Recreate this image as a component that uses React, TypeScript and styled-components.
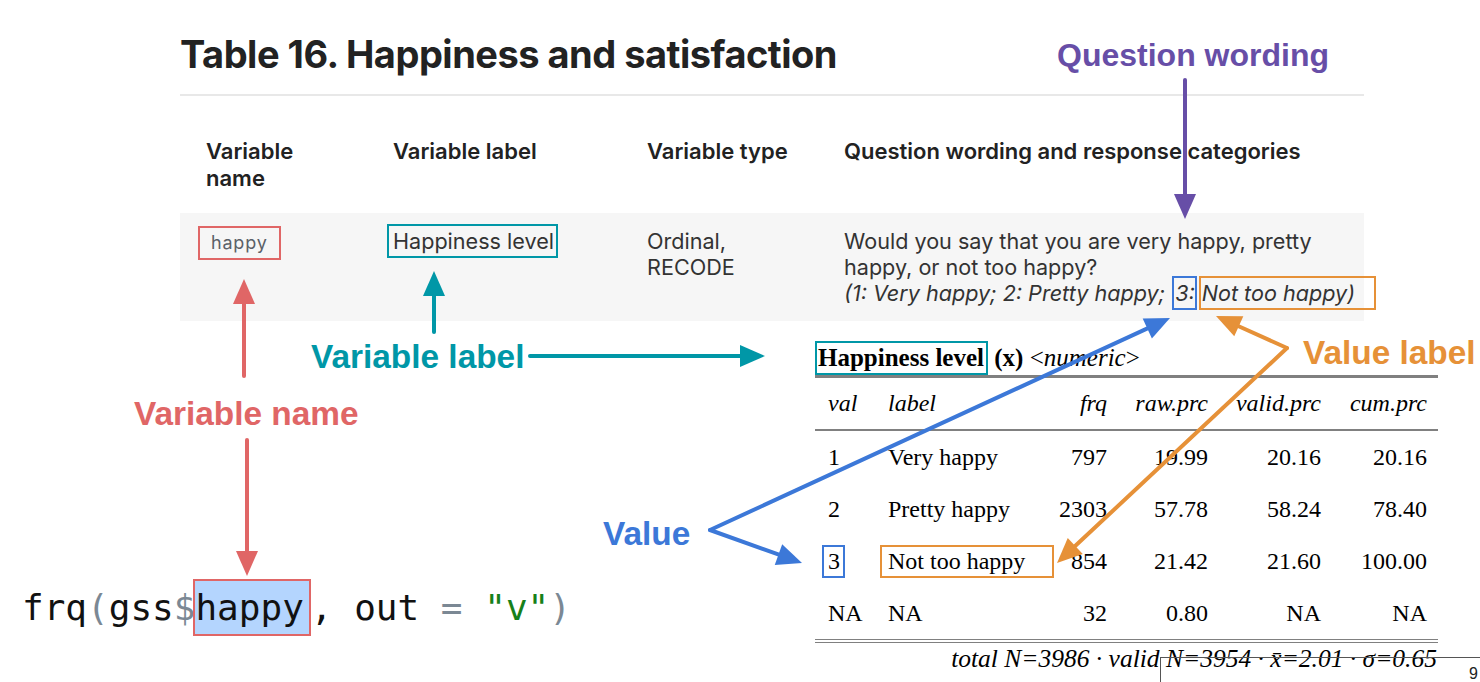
import React from "react";
import styled, { createGlobalStyle } from "styled-components";

const C = {
  red: "#e06666",
  teal: "#0097a7",
  purple: "#674ea7",
  blue: "#3c78d8",
  orange: "#e69138",
};

const Global = createGlobalStyle`
  html, body { margin: 0; padding: 0; background: #fff; }
  #root { width: 1480px; height: 682px; }
`;

const Page = styled.div`
  position: relative;
  width: 1480px;
  height: 682px;
  overflow: hidden;
  background: #fff;
  font-family: Inter, "Noto Sans", sans-serif;
`;

/* ---------- codebook table (top) ---------- */
const Codebook = styled.section`
  width: 1184px;
  margin-left: 180px;
  padding-top: 32px;
`;

const Title = styled.h1`
  margin: 0;
  font: 700 38px/45px Inter, "Noto Sans", sans-serif;
  letter-spacing: -0.5px;
  color: #222;
`;

const Divider = styled.hr`
  margin: 17px 0 0;
  border: 0;
  height: 2px;
  background: #e8e8e8;
`;

const CbRow = styled.div<{ $head?: boolean }>`
  display: grid;
  grid-template-columns: 187px 254px 197px 546px;
  padding: ${(p) => (p.$head ? "42px 0 21px" : "15px 0")};
  background: ${(p) => (p.$head ? "transparent" : "#f6f6f6")};
  font-size: ${(p) => (p.$head ? "22px" : "21.6px")};
  line-height: ${(p) => (p.$head ? "27px" : "26px")};
  font-weight: ${(p) => (p.$head ? 600 : 400)};
  color: ${(p) => (p.$head ? "#222" : "#333")};
`;

const CbCell = styled.div`
  padding-left: 26px;
  white-space: nowrap;
`;

const CodeChip = styled.span`
  display: inline-block;
  margin: -4px 0 0 -8px;
  padding: 0 11px;
  line-height: 30px;
  border: 2px solid ${C.red};
  font-size: 18px;
  color: #5b6168;
  letter-spacing: 0.8px;
`;

const LabelChip = styled.span`
  display: inline-block;
  margin: -4px 0 0 -6px;
  padding: 0 2px 0 4px;
  line-height: 30px;
  border: 2px solid ${C.teal};
`;

const Italic = styled.span`
  font-style: italic;
`;

const InlineMark = styled.span<{ $color: string; $pr?: number; $ml?: number }>`
  border: 2px solid ${(p) => p.$color};
  padding: 2px ${(p) => p.$pr ?? 0}px 2px 1px;
  margin: 0 -1px 0 ${(p) => p.$ml ?? 0}px;
`;

/* ---------- lower area ---------- */
const Lower = styled.section`
  display: grid;
  grid-template-columns: 815px 623px;
  height: 360px;
`;

const CodeCol = styled.div`
  align-self: end;
  padding: 0 0 45px 22px;
`;

const CodeLine = styled.div`
  font-family: "DejaVu Sans Mono", "Liberation Mono", monospace;
  font-size: 36px;
  line-height: 57px;
  color: #111;
  white-space: pre;
`;

const Tok = styled.span<{ $c: string }>`
  color: ${(p) => p.$c};
`;

const Highlight = styled.span`
  display: inline-block;
  vertical-align: top;
  line-height: 53px;
  margin-left: -2px;
  padding-right: 5px;
  background: #b4d5fe;
  border: 2px solid ${C.red};
`;

const FrqCol = styled.div`
  padding-top: 20px;
  font-family: "Liberation Serif", "Times New Roman", serif;
  font-size: 24px;
  color: #000;
`;

const FrqTitle = styled.div`
  height: 34px;
  line-height: 34px;
  font-size: 25px;
  white-space: nowrap;
`;

const TitleBox = styled.span`
  display: inline-block;
  vertical-align: top;
  line-height: 30px;
  padding: 0 2px 0 1px;
  border: 2px solid ${C.teal};
  font-weight: 700;
`;

const Rule = styled.div<{ $w: number; $double?: boolean }>`
  border-top: ${(p) => p.$w}px ${(p) => (p.$double ? "double" : "solid")} #808080;
`;

const FrqRow = styled.div<{ $h: number; $italic?: boolean }>`
  display: grid;
  grid-template-columns: 73px 159px 60px 101px 113px 106px;
  padding-right: 11px;
  height: ${(p) => p.$h}px;
  align-items: center;
  font-style: ${(p) => (p.$italic ? "italic" : "normal")};
`;

const FCell = styled.div<{ $right?: boolean; $first?: boolean }>`
  text-align: ${(p) => (p.$right ? "right" : "left")};
  padding-left: ${(p) => (p.$first ? 13 : 0)}px;
  white-space: nowrap;
`;

const ValBox = styled.span`
  display: inline-block;
  margin-left: -6px;
  padding: 0 3px 0 4px;
  line-height: 29px;
  border: 2px solid ${C.blue};
`;

const LabBox = styled.span`
  display: inline-block;
  margin-left: -8px;
  padding: 0 27px 0 6px;
  line-height: 29px;
  border: 2px solid ${C.orange};
`;

const Footer = styled.div`
  text-align: right;
  padding-right: 1px;
  line-height: 32px;
  font-size: 25.5px;
  font-style: italic;
  white-space: nowrap;
`;

/* ---------- annotations ---------- */
const Note = styled.div<{ $color: string; $x: number; $y: number; $size?: number }>`
  position: absolute;
  left: ${(p) => p.$x}px;
  top: ${(p) => p.$y}px;
  color: ${(p) => p.$color};
  font-family: "Liberation Sans", Arial, sans-serif;
  font-weight: 700;
  font-size: ${(p) => p.$size ?? 33.4}px;
  line-height: 32px;
  white-space: nowrap;
`;

const Overlay = styled.svg`
  position: absolute;
  left: 0;
  top: 0;
  pointer-events: none;
`;

const CropEdge = styled.div`
  position: absolute;
  left: 1160px;
  top: 657px;
  width: 330px;
  height: 30px;
  border-top: 1px solid #555;
  border-left: 1px solid #555;
  font: 16px/16px "Liberation Sans", Arial, sans-serif;
  color: #222;
  overflow: hidden;
`;

const CropGlyph = styled.span`
  position: absolute;
  left: 308px;
  top: 8px;
`;

type ArrowProps = {
  x1: number;
  y1: number;
  x2: number;
  y2: number;
  color: string;
  head?: number;
  half?: number;
  w?: number;
};

function Arrow({ x1, y1, x2, y2, color, head = 25, half = 11, w = 4 }: ArrowProps) {
  const dx = x2 - x1;
  const dy = y2 - y1;
  const L = Math.hypot(dx, dy);
  const ux = dx / L;
  const uy = dy / L;
  const bx = x2 - ux * head;
  const by = y2 - uy * head;
  const nx = -uy;
  const ny = ux;
  return (
    <g>
      <line x1={x1} y1={y1} x2={bx + ux * 2} y2={by + uy * 2} stroke={color} strokeWidth={w} strokeLinecap="round" />
      <polygon
        points={`${x2},${y2} ${bx + nx * half},${by + ny * half} ${bx - nx * half},${by - ny * half}`}
        fill={color}
      />
    </g>
  );
}

const rows = [
  { v: "1", l: "Very happy", f: "797", r: "19.99", va: "20.16", c: "20.16" },
  { v: "2", l: "Pretty happy", f: "2303", r: "57.78", va: "58.24", c: "78.40" },
  { v: "3", l: "Not too happy", f: "854", r: "21.42", va: "21.60", c: "100.00", mark: true },
  { v: "NA", l: "NA", f: "32", r: "0.80", va: "NA", c: "NA" },
];

export default function App() {
  return (
    <Page>
      <Global />
      <Codebook>
        <Title>Table 16. Happiness and satisfaction</Title>
        <Divider />
        <CbRow $head>
          <CbCell>
            Variable
            <br />
            name
          </CbCell>
          <CbCell>Variable label</CbCell>
          <CbCell>Variable type</CbCell>
          <CbCell>Question wording and response categories</CbCell>
        </CbRow>
        <CbRow>
          <CbCell>
            <CodeChip>happy</CodeChip>
          </CbCell>
          <CbCell>
            <LabelChip>Happiness level</LabelChip>
          </CbCell>
          <CbCell>
            Ordinal,
            <br />
            RECODE
          </CbCell>
          <CbCell>
            Would you say that you are very happy, pretty
            <br />
            happy, or not too happy?
            <br />
            <Italic>
              (1: Very happy; 2: Pretty happy;{" "}
              <InlineMark $color={C.blue} $ml={1}>
                3:
              </InlineMark>
              <InlineMark $color={C.orange} $pr={19} $ml={3}>
                Not too happy)
              </InlineMark>
            </Italic>
          </CbCell>
        </CbRow>
      </Codebook>

      <Lower>
        <CodeCol>
          <CodeLine>
            frq<Tok $c="#7b8894">(</Tok>gss<Tok $c="#7b8894">$</Tok>
            <Highlight>happy</Highlight>, out <Tok $c="#7b8894">=</Tok> <Tok $c="#16801a">"v"</Tok>
            <Tok $c="#7b8894">)</Tok>
          </CodeLine>
        </CodeCol>
        <FrqCol>
          <FrqTitle>
            <TitleBox>Happiness level</TitleBox> <b>(x)</b> &lt;<i>numeric</i>&gt;
          </FrqTitle>
          <Rule $w={3} />
          <FrqRow $h={51} $italic>
            <FCell $first>val</FCell>
            <FCell>label</FCell>
            <FCell $right>frq</FCell>
            <FCell $right>raw.prc</FCell>
            <FCell $right>valid.prc</FCell>
            <FCell $right>cum.prc</FCell>
          </FrqRow>
          <Rule $w={2} />
          {rows.map((r) => (
            <FrqRow $h={52} key={r.v}>
              <FCell $first>{r.mark ? <ValBox>{r.v}</ValBox> : r.v}</FCell>
              <FCell>{r.mark ? <LabBox>{r.l}</LabBox> : r.l}</FCell>
              <FCell $right>{r.f}</FCell>
              <FCell $right>{r.r}</FCell>
              <FCell $right>{r.va}</FCell>
              <FCell $right>{r.c}</FCell>
            </FrqRow>
          ))}
          <Rule $w={4} $double />
          <Footer>total N=3986 · valid N=3954 · x̄=2.01 · σ=0.65</Footer>
        </FrqCol>
      </Lower>

      <Note $color={C.purple} $x={1057} $y={39} $size={32}>
        Question wording
      </Note>
      <Note $color={C.red} $x={134} $y={398}>
        Variable name
      </Note>
      <Note $color={C.teal} $x={311} $y={341}>
        Variable label
      </Note>
      <Note $color={C.blue} $x={603} $y={518}>
        Value
      </Note>
      <Note $color={C.orange} $x={1303} $y={337}>
        Value label
      </Note>

      <CropEdge>
        <CropGlyph>9</CropGlyph>
      </CropEdge>

      <Overlay width={1480} height={682} viewBox="0 0 1480 682">
        <Arrow x1={1185} y1={80} x2={1185} y2={219} color={C.purple} />
        <Arrow x1={244} y1={376} x2={244} y2={279} color={C.red} />
        <Arrow x1={247} y1={440} x2={247} y2={576} color={C.red} />
        <Arrow x1={434} y1={332} x2={434} y2={271} color={C.teal} />
        <Arrow x1={530} y1={356} x2={765} y2={356} color={C.teal} />
        <Arrow x1={710} y1={530} x2={1170} y2={318} color={C.blue} />
        <Arrow x1={710} y1={530} x2={802} y2={563} color={C.blue} />
        <Arrow x1={1287} y1={348} x2={1216} y2={316} color={C.orange} />
        <Arrow x1={1287} y1={348} x2={1057} y2={563} color={C.orange} />
      </Overlay>
    </Page>
  );
}
